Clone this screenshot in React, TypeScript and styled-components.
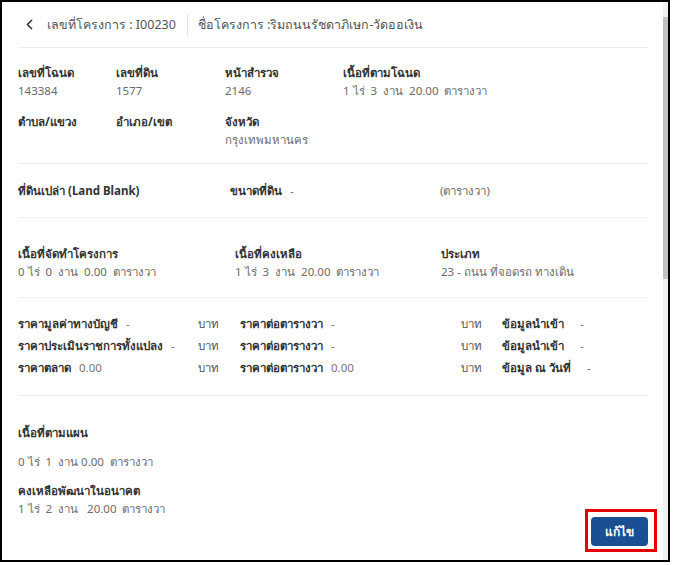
import React from "react";
import styled, { createGlobalStyle } from "styled-components";
import { ChevronLeft } from "lucide-react";

const Global = createGlobalStyle`
  html, body { margin: 0; padding: 0; background: #fff; }
  body { font-family: "Noto Sans", "Open Sans", "DejaVu Sans", sans-serif; }
  * { box-sizing: border-box; }
`;

const Frame = styled.div`
  width: 670px;
  height: 562px;
  border: 2px solid #000;
  display: flex;
  background: #fff;
  overflow: hidden;
`;

const Content = styled.div`
  flex: 1;
  padding: 0 15px 0 16px;
  display: flex;
  flex-direction: column;
`;

const Scrollbar = styled.div`
  width: 5px;
  background: #f1f1f1;
  display: flex;
  flex-direction: column;
  padding-top: 15px;
`;

const Thumb = styled.div`
  height: 262px;
  background: #c1c1c1;
`;

const Header = styled.div`
  height: 46px;
  display: flex;
  align-items: center;
  padding-left: 3px;
  border-bottom: 1px solid #eeeeee;
  color: #555;
  font-size: 12.5px;
`;

const Back = styled.span`
  display: flex;
  align-items: center;
  color: #333;
  margin-right: 9px;
`;

const Separator = styled.span`
  width: 1px;
  height: 22px;
  background: #e3e3e3;
  margin: 0 10px 0 11px;
`;

const Section = styled.div<{ $pt: number; $pb: number; $last?: boolean }>`
  padding: ${(p) => p.$pt}px 0 ${(p) => p.$pb}px;
  border-bottom: ${(p) => (p.$last ? "none" : "1px solid #eeeeee")};
`;

const Grid = styled.div<{ $cols: string; $rowGap?: number }>`
  display: grid;
  grid-template-columns: ${(p) => p.$cols};
  row-gap: ${(p) => p.$rowGap ?? 0}px;
  align-items: start;
`;

const Label = styled.div<{ $mt?: number }>`
  font-size: 11.5px;
  line-height: 18px;
  font-weight: 700;
  color: #333;
  white-space: nowrap;
  margin-top: ${(p) => p.$mt ?? 0}px;
`;

const Value = styled.div<{ $mt?: number }>`
  font-size: 11.5px;
  line-height: 18px;
  color: #6b6b6b;
  white-space: pre;
  margin-top: ${(p) => p.$mt ?? 0}px;
`;

const Inline = styled.div<{ $lh?: number }>`
  display: flex;
  align-items: baseline;
  gap: 8px;
  font-size: 11.5px;
  line-height: ${(p) => p.$lh ?? 22}px;
  white-space: nowrap;
`;

const InlineLabel = styled.span`
  font-weight: 700;
  color: #333;
`;

const InlineValue = styled.span<{ $ml?: number }>`
  color: #777;
  margin-left: ${(p) => p.$ml ?? 0}px;
`;

const Unit = styled.span`
  font-size: 11.5px;
  line-height: 22px;
  color: #555;
`;

const PlanBlock = styled.div`
  display: flex;
  flex-direction: column;
`;

const Highlight = styled.div`
  align-self: flex-end;
  margin: -9px -9px 0 0;
  border: 3px solid #e60000;
  padding: 5px 6px 3px 3px;
`;

const EditButton = styled.button`
  width: 57px;
  height: 29px;
  border: none;
  border-radius: 4px;
  background: #1a4f94;
  color: #fff;
  font-family: inherit;
  font-size: 12px;
  font-weight: 700;
  cursor: pointer;
`;

const Cell: React.FC<{ label: string; value?: string }> = ({ label, value }) => (
  <div>
    <Label>{label}</Label>
    {value !== undefined && <Value>{value}</Value>}
  </div>
);

const priceRows = [
  ["ราคามูลค่าทางบัญชี", "-", "ราคาต่อตารางวา", "-", "ข้อมูลนำเข้า", "-", 8],
  ["ราคาประเมินราชการทั้งแปลง", "-", "ราคาต่อตารางวา", "-", "ข้อมูลนำเข้า", "-", 8],
  ["ราคาตลาด", "0.00", "ราคาต่อตารางวา", "0.00", "ข้อมูล ณ วันที่", "-", 8],
] as const;

export default function App() {
  return (
    <>
      <Global />
      <Frame>
        <Content>
          <Header>
            <Back>
              <ChevronLeft size={17} strokeWidth={2.2} />
            </Back>
            <span>เลขที่โครงการ : I00230</span>
            <Separator />
            <span>ชื่อโครงการ :ริมถนนรัชดาภิเษก-วัดออเงิน</span>
          </Header>

          <Section $pt={16} $pb={14}>
            <Grid $cols="98px 109px 118px 1fr" $rowGap={13}>
              <Cell label="เลขที่โฉนด" value="143384" />
              <Cell label="เลขที่ดิน" value="1577" />
              <Cell label="หน้าสำรวจ" value="2146" />
              <Cell label="เนื้อที่ตามโฉนด" value="1 ไร่  3  งาน  20.00  ตารางวา" />
              <Cell label="ตำบล/แขวง" />
              <Cell label="อำเภอ/เขต" />
              <Cell label="จังหวัด" value="กรุงเทพมหานคร" />
            </Grid>
          </Section>

          <Section $pt={18} $pb={17}>
            <Grid $cols="212px 210px 1fr">
              <Label>ที่ดินเปล่า (Land Blank)</Label>
              <Inline $lh={18}>
                <InlineLabel>ขนาดที่ดิน</InlineLabel>
                <InlineValue>-</InlineValue>
              </Inline>
              <Value>(ตารางวา)</Value>
            </Grid>
          </Section>

          <Section $pt={27} $pb={16}>
            <Grid $cols="217px 206px 1fr">
              <Cell label="เนื้อที่จัดทำโครงการ" value="0 ไร่  0  งาน  0.00  ตารางวา" />
              <Cell label="เนื้อที่คงเหลือ" value="1 ไร่  3  งาน  20.00  ตารางวา" />
              <Cell label="ประเภท" value="23 - ถนน ที่จอดรถ ทางเดิน" />
            </Grid>
          </Section>

          <Section $pt={15} $pb={16}>
            <Grid $cols="180px 42px 221px 41px 1fr">
              {priceRows.map((r, i) => (
                <React.Fragment key={i}>
                  <Inline>
                    <InlineLabel>{r[0]}</InlineLabel>
                    <InlineValue>{r[1]}</InlineValue>
                  </Inline>
                  <Unit>บาท</Unit>
                  <Inline>
                    <InlineLabel>{r[2]}</InlineLabel>
                    <InlineValue>{r[3]}</InlineValue>
                  </Inline>
                  <Unit>บาท</Unit>
                  <Inline>
                    <InlineLabel>{r[4]}</InlineLabel>
                    <InlineValue $ml={r[6]}>{r[5]}</InlineValue>
                  </Inline>
                </React.Fragment>
              ))}
            </Grid>
          </Section>

          <Section $pt={28} $pb={0} $last>
            <PlanBlock>
              <Label>เนื้อที่ตามแผน</Label>
              <Value $mt={11}>{"0 ไร่  1  งาน 0.00  ตารางวา"}</Value>
              <Label $mt={11}>คงเหลือพัฒนาในอนาคต</Label>
              <Value>{"1 ไร่  2  งาน   20.00  ตารางวา"}</Value>
              <Highlight>
                <EditButton>แก้ไข</EditButton>
              </Highlight>
            </PlanBlock>
          </Section>
        </Content>
        <Scrollbar>
          <Thumb />
        </Scrollbar>
      </Frame>
    </>
  );
}
